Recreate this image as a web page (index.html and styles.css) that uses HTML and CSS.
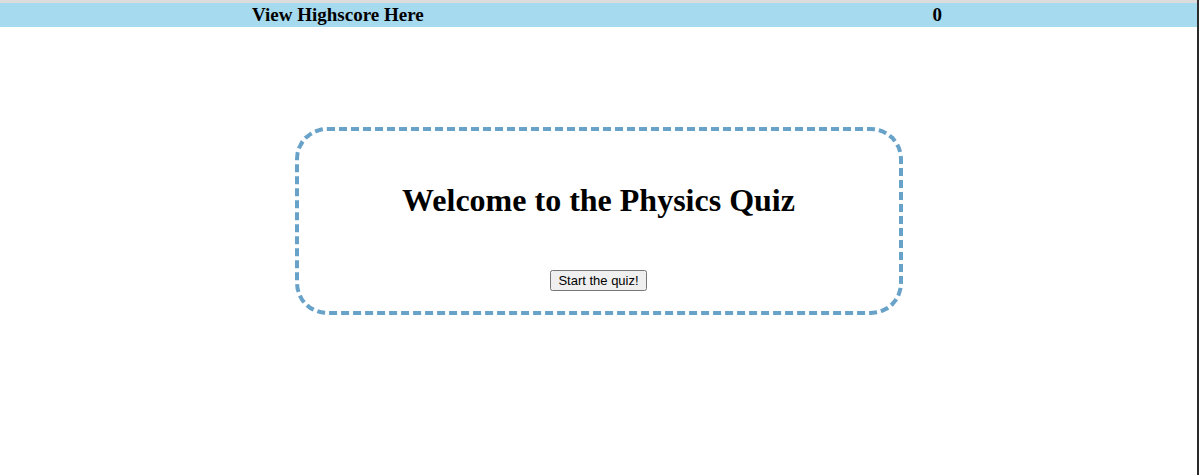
FILE: index.html
```html
<!DOCTYPE html>
<html>
<head>
<meta charset="utf-8">
<link rel="stylesheet" href="styles.css">
</head>
<body>
<div class="page">
  <div class="topline"></div>
  <header class="bar">
    <span class="bar-item">View Highscore Here</span>
    <span class="bar-item">0</span>
  </header>
  <main class="quiz">
    <h1 class="title">Welcome to the Physics Quiz</h1>
    <button class="start">Start the quiz!</button>
  </main>
</div>
</body>
</html>
```
FILE: styles.css
```css
html, body {
  margin: 0;
  padding: 0;
  height: 100%;
  background: #ffffff;
}
body {
  font-family: "Liberation Serif", "Times New Roman", serif;
}
.page {
  height: 100%;
  width: 1197px;
  border-right: 2px solid #2b2b2b;
  box-sizing: content-box;
}
.topline {
  height: 3px;
  background: #dcdcdc;
}
.bar {
  height: 24px;
  background: #a6daee;
  display: flex;
  justify-content: space-between;
  align-items: center;
  padding: 0 255px 0 252px;
}
.bar-item {
  font-weight: bold;
  font-size: 19px;
  line-height: 24px;
}
.quiz {
  width: 600px;
  height: 129px;
  margin: 100px auto 0;
  border: 4px dashed #68a2c8;
  border-radius: 32px;
  display: flex;
  flex-direction: column;
  align-items: center;
  padding-top: 51px;
  box-sizing: content-box;
}
.title {
  margin: 0;
  font-size: 32px;
  font-weight: bold;
  line-height: 37px;
}
.start {
  margin-top: 51px;
  font-family: "Liberation Sans", Arial, sans-serif;
  font-size: 13px;
  padding: 1px 6px;
  height: 21px;
}
```
